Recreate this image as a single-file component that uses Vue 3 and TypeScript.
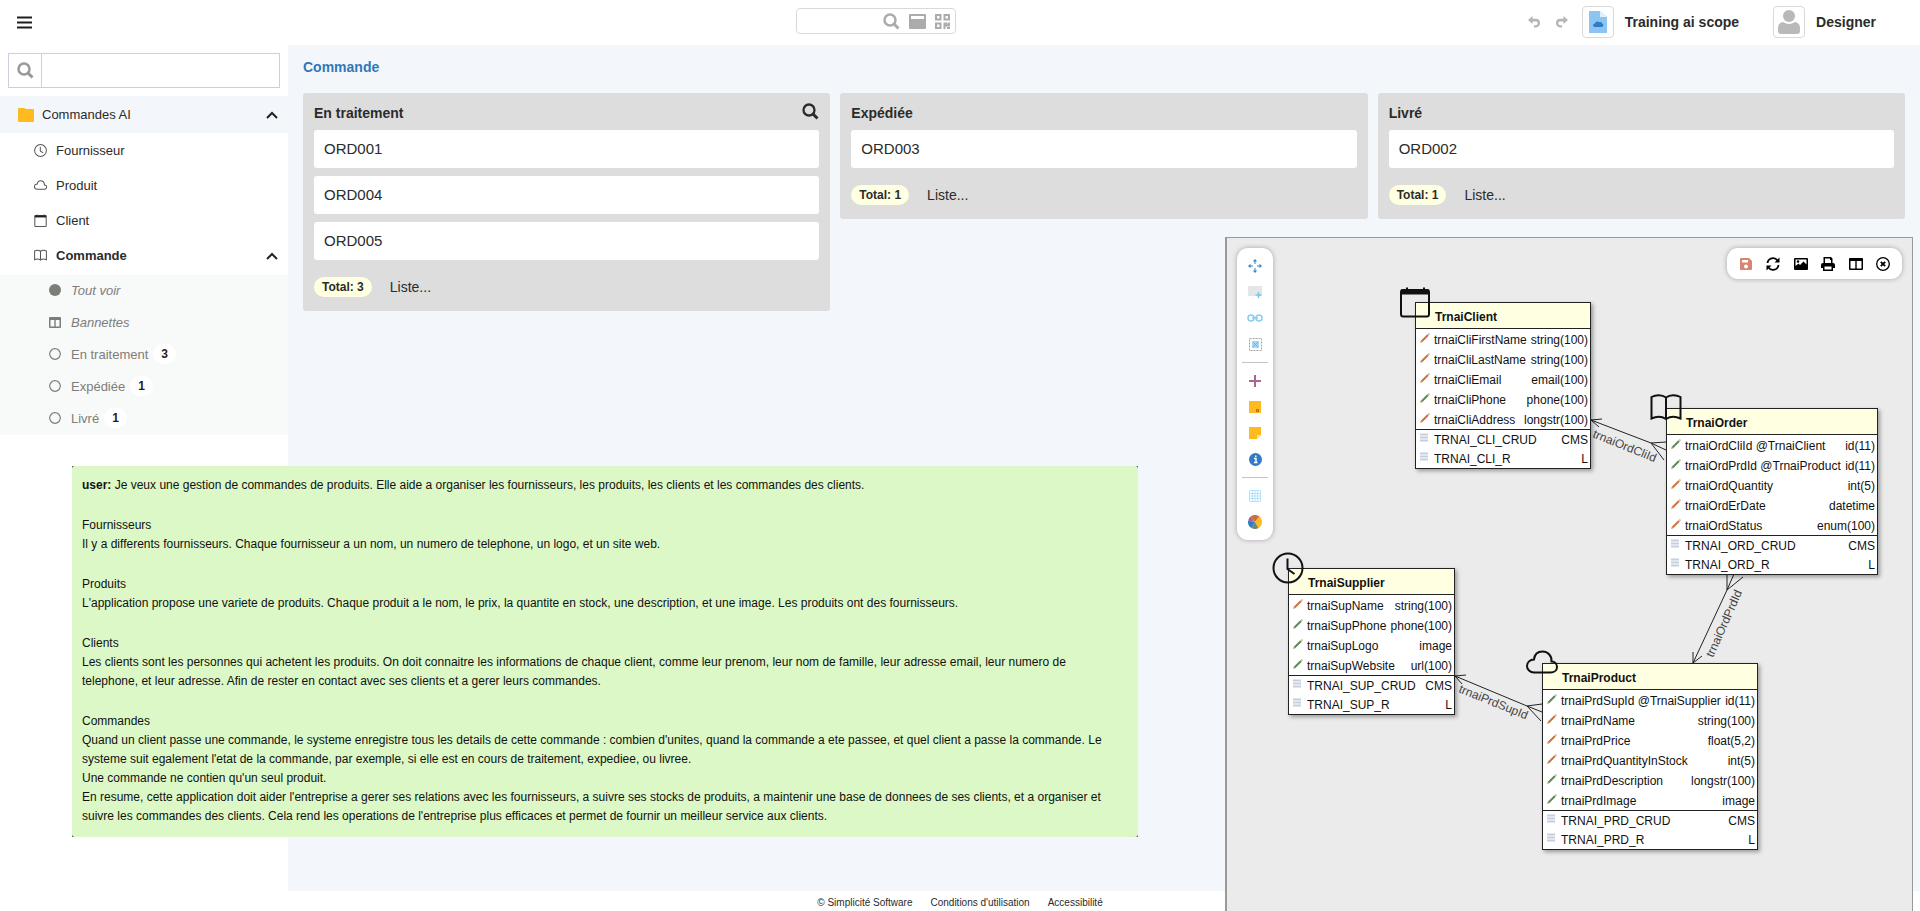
<script setup lang="ts">
import { ref } from 'vue'

type Glyph = 'clock' | 'cloud' | 'calendar' | 'book'

interface Field { name: string; type: string; required: boolean }
interface Entity {
  id: string
  title: string
  glyph: Glyph
  x: number
  y: number
  width: number
  fields: Field[]
  groups: { name: string; rights: string }[]
}

const f = (name: string, type: string, required = true): Field => ({ name, type, required })

const glyphs: Record<Glyph, string> = {
  clock: 'M16 1.500a14.500 14.500 0 1 0 0 29a14.500 14.500 0 1 0 0-29M15.500 6.500V17L22.500 22',
  cloud: 'M8 25.500H24.500C28.500 25.500 31 23 31 20C31 16.500 28.500 14.300 25.500 14.500C26 8.500 21.500 4.500 16.500 4.500C11.500 4.500 8.500 7.500 8 12.500C4 12.500 1 15.300 1 19C1 22.500 4 25.500 8 25.500Z',
  calendar: 'M4 4H28Q30 4 30 6V28Q30 30.500 28 30.500H4Q2 30.500 2 28V6Q2 4 4 4ZM2 6H30M8 1.500V4M25 1.500V4',
  book: 'M16 5.500V27M16 5.500C12 2.500 6 2.500 1.500 5V26.500C6 24.500 12 24.500 16 27C20 24.500 26 24.500 30.500 26.500V5C26 2.500 20 2.500 16 5.500',
}

const modules: { label: string; glyph: Glyph; active?: boolean }[] = [
  { label: 'Fournisseur', glyph: 'clock' },
  { label: 'Produit', glyph: 'cloud' },
  { label: 'Client', glyph: 'calendar' },
  { label: 'Commande', glyph: 'book', active: true },
]

const states = [
  { label: 'En traitement', count: 3 },
  { label: 'Expédiée', count: 1 },
  { label: 'Livré', count: 1 },
]

const columns = [
  { title: 'En traitement', orders: ['ORD001', 'ORD004', 'ORD005'], search: true },
  { title: 'Expédiée', orders: ['ORD003'], search: false },
  { title: 'Livré', orders: ['ORD002'], search: false },
]

const entities: Entity[] = [
  {
    id: 'client', title: 'TrnaiClient', glyph: 'calendar', x: 188, y: 64, width: 176,
    fields: [
      f('trnaiCliFirstName', 'string(100)'),
      f('trnaiCliLastName', 'string(100)'),
      f('trnaiCliEmail', 'email(100)'),
      f('trnaiCliPhone', 'phone(100)', false),
      f('trnaiCliAddress', 'longstr(100)'),
    ],
    groups: [{ name: 'TRNAI_CLI_CRUD', rights: 'CMS' }, { name: 'TRNAI_CLI_R', rights: 'L' }],
  },
  {
    id: 'order', title: 'TrnaiOrder', glyph: 'book', x: 439, y: 170, width: 212,
    fields: [
      f('trnaiOrdCliId @TrnaiClient', 'id(11)', false),
      f('trnaiOrdPrdId @TrnaiProduct', 'id(11)', false),
      f('trnaiOrdQuantity', 'int(5)'),
      f('trnaiOrdErDate', 'datetime'),
      f('trnaiOrdStatus', 'enum(100)'),
    ],
    groups: [{ name: 'TRNAI_ORD_CRUD', rights: 'CMS' }, { name: 'TRNAI_ORD_R', rights: 'L' }],
  },
  {
    id: 'supplier', title: 'TrnaiSupplier', glyph: 'clock', x: 61, y: 330, width: 167,
    fields: [
      f('trnaiSupName', 'string(100)'),
      f('trnaiSupPhone', 'phone(100)', false),
      f('trnaiSupLogo', 'image', false),
      f('trnaiSupWebsite', 'url(100)', false),
    ],
    groups: [{ name: 'TRNAI_SUP_CRUD', rights: 'CMS' }, { name: 'TRNAI_SUP_R', rights: 'L' }],
  },
  {
    id: 'product', title: 'TrnaiProduct', glyph: 'cloud', x: 315, y: 425, width: 216,
    fields: [
      f('trnaiPrdSupId @TrnaiSupplier', 'id(11)', false),
      f('trnaiPrdName', 'string(100)'),
      f('trnaiPrdPrice', 'float(5,2)'),
      f('trnaiPrdQuantityInStock', 'int(5)'),
      f('trnaiPrdDescription', 'longstr(100)', false),
      f('trnaiPrdImage', 'image', false),
    ],
    groups: [{ name: 'TRNAI_PRD_CRUD', rights: 'CMS' }, { name: 'TRNAI_PRD_R', rights: 'L' }],
  },
]

const relations = [
  {
    id: 'trnaiOrdCliId', x: 365, y: 199, angle: 22,
    path: 'M364 182L424 205L439 212M375 181L364 182L372 189M439 204L424 205L437 222',
  },
  {
    id: 'trnaiPrdSupId', x: 231, y: 454, angle: 22,
    path: 'M228 438L300 468L315 474M239 437L228 438L235 446M315 466L300 468L314 483',
  },
  {
    id: 'trnaiOrdPrdId', x: 486, y: 420, angle: -66,
    path: 'M466 425L500 352L507 336M466 414L466 425L475 418M500 336V352L516 339',
  },
]

const prompt: { lead?: string; lines: string[] }[] = [
  {
    lead: 'user:',
    lines: ['Je veux une gestion de commandes de produits. Elle aide a organiser les fournisseurs, les produits, les clients et les commandes des clients.'],
  },
  {
    lines: ['Fournisseurs', 'Il y a differents fournisseurs. Chaque fournisseur a un nom, un numero de telephone, un logo, et un site web.'],
  },
  {
    lines: ['Produits', "L'application propose une variete de produits. Chaque produit a le nom, le prix, la quantite en stock, une description, et une image. Les produits ont des fournisseurs."],
  },
  {
    lines: [
      'Clients',
      'Les clients sont les personnes qui achetent les produits. On doit connaitre les informations de chaque client, comme leur prenom, leur nom de famille, leur adresse email, leur numero de',
      'telephone, et leur adresse. Afin de rester en contact avec ses clients et a gerer leurs commandes.',
    ],
  },
  {
    lines: [
      'Commandes',
      "Quand un client passe une commande, le systeme enregistre tous les details de cette commande : combien d'unites, quand la commande a ete passee, et quel client a passe la commande. Le",
      "systeme suit egalement l'etat de la commande, par exemple, si elle est en cours de traitement, expediee, ou livree.",
      "Une commande ne contien qu'un seul produit.",
      "En resume, cette application doit aider l'entreprise a gerer ses relations avec les fournisseurs, a suivre ses stocks de produits, a maintenir une base de donnees de ses clients, et a organiser et",
      "suivre les commandes des clients. Cela rend les operations de l'entreprise plus efficaces et permet de fournir un meilleur service aux clients.",
    ],
  },
]

const menuQuery = ref('')
const globalQuery = ref('')
</script>

<template>
  <div class="page">
    <header class="topbar">
      <button class="icon-btn burger" aria-label="Menu">
        <svg width="15" height="13" viewBox="0 0 15 13"><path d="M0 1.500H15M0 6.500H15M0 11.500H15" stroke="#1f1f1f" stroke-width="2" /></svg>
      </button>
      <div class="global-search">
        <input v-model="globalQuery" type="text" aria-label="Recherche globale" />
        <button class="icon-btn" aria-label="Rechercher">
          <svg width="17" height="17" viewBox="0 0 17 17" fill="none" stroke="#ababab"><circle cx="7" cy="7" r="5.500" stroke-width="2.500" /><path d="M11 11L15.500 15.500" stroke-width="3" /></svg>
        </button>
        <button class="icon-btn" aria-label="Formulaire">
          <svg width="17" height="15" viewBox="0 0 17 15"><path fill="#ababab" fill-rule="evenodd" d="M1 0H16Q17 0 17 1V14Q17 15 16 15H1Q0 15 0 14V1Q0 0 1 0ZM2 2V5H15V2Z" /></svg>
        </button>
        <button class="icon-btn" aria-label="QR code">
          <svg width="15" height="15" viewBox="0 0 15 15" fill="none" stroke="#ababab" stroke-width="2"><path d="M1 1H5.500V5.500H1ZM9.500 1H14V5.500H9.500ZM1 9.500H5.500V14H1Z" /><path d="M9.500 15V9.500H11.500V11.500H14V8.500M12 14H15" /></svg>
        </button>
      </div>
      <div class="account">
        <button class="icon-btn" aria-label="Annuler">
          <svg width="13" height="12" viewBox="0 0 13 12"><path fill="#b5b5b5" d="M0 4L4.500 0V2.700H8C11 2.700 12 4.500 12 7.200C12 9.800 10 11.500 7 11.500H6V9.300H7C8.700 9.300 9.600 8.500 9.600 7.200C9.600 5.800 9 5.400 8 5.400H4.500V8Z" /></svg>
        </button>
        <button class="icon-btn" aria-label="Rétablir">
          <svg width="13" height="12" viewBox="0 0 13 12"><path fill="#b5b5b5" d="M13 4L8.500 0V2.700H5C2 2.700 1 4.500 1 7.200C1 9.800 3 11.500 6 11.500H7V9.300H6C4.300 9.300 3.400 8.500 3.400 7.200C3.400 5.800 4 5.400 5 5.400H8.500V8Z" /></svg>
        </button>
        <button class="profile scope">
          <span class="avatar">
            <svg width="18" height="22" viewBox="0 0 18 22"><path d="M0 0H11L18 6V22H0Z" fill="#8cc4f2" /><path d="M11 0L18 6H11Z" fill="#dff1fd" /><path d="M6 16C3.500 16 3.500 12.500 6 12.500C6.500 10.500 9 10 10.500 11.200C12 10.500 13 11.500 13 12.500C15 13 14.500 16 13 16Z" fill="#2f7bc4" /></svg>
          </span>
          Training ai scope
        </button>
        <button class="profile">
          <span class="avatar">
            <svg width="22" height="24" viewBox="0 0 22 24" fill="#b9b9b9"><circle cx="11" cy="6" r="6" /><path d="M5 12Q11 16 17 12Q22 13 22 18V21Q22 24 19 24H3Q0 24 0 21V18Q0 13 5 12Z" /></svg>
          </span>
          Designer
        </button>
      </div>
    </header>

    <div class="body">
      <aside class="sidebar">
        <label class="menu-search">
          <span class="lens">
            <svg width="17" height="17" viewBox="0 0 17 17" fill="none" stroke="#999"><circle cx="7" cy="7" r="5.500" stroke-width="2.500" /><path d="M11 11L15.500 15.500" stroke-width="3" /></svg>
          </span>
          <input v-model="menuQuery" type="text" aria-label="Recherche menu" />
        </label>
        <nav>
          <a href="#" class="domain">
            <svg width="16" height="14" viewBox="0 0 16 14"><path fill="#ffba1f" d="M1 0H6L8 1H15Q16 1 16 2V13Q16 14 15 14H1Q0 14 0 13V1Q0 0 1 0Z" /></svg>
            <span>Commandes AI</span>
            <svg class="chevron" width="12" height="8" viewBox="0 0 12 8"><path d="M1 7L6 2L11 7" fill="none" stroke="#222" stroke-width="2" /></svg>
          </a>
          <ul class="modules">
            <li v-for="m in modules" :key="m.label">
              <a href="#" :class="{ active: m.active }">
                <svg width="13" height="13" viewBox="0 0 32 32" fill="none" stroke="#555" stroke-width="2.500"><path :d="glyphs[m.glyph]" /><path v-if="m.glyph === 'calendar'" d="M2 6H30" stroke="#222" stroke-width="5" /></svg>
                <span>{{ m.label }}</span>
                <svg v-if="m.active" class="chevron" width="12" height="8" viewBox="0 0 12 8"><path d="M1 7L6 2L11 7" fill="none" stroke="#222" stroke-width="2" /></svg>
              </a>
            </li>
          </ul>
          <ul class="views">
            <li>
              <a href="#" class="slanted">
                <svg width="12" height="12" viewBox="0 0 12 12"><circle cx="6" cy="6" r="6" fill="#7b7f78" /></svg>Tout voir
              </a>
            </li>
            <li>
              <a href="#" class="slanted">
                <svg width="12" height="11" viewBox="0 0 12 11"><path fill="#7b7f78" fill-rule="evenodd" d="M1 0H11Q12 0 12 1V10Q12 11 11 11H1Q0 11 0 10V1Q0 0 1 0ZM1.500 3V9.500H5.300V3ZM6.700 3V9.500H10.500V3Z" /></svg>Bannettes
              </a>
            </li>
            <li v-for="s in states" :key="s.label">
              <a href="#">
                <svg width="12" height="12" viewBox="0 0 12 12"><circle cx="6" cy="6" r="5.300" fill="none" stroke="#7b7f78" stroke-width="1.200" /></svg>{{ s.label }}
                <span class="count">{{ s.count }}</span>
              </a>
            </li>
          </ul>
        </nav>
      </aside>

      <main class="board">
        <h1><a href="#">Commande</a></h1>
        <div class="columns">
          <section v-for="c in columns" :key="c.title" class="column">
            <header>
              <h2>{{ c.title }}</h2>
              <button v-if="c.search" class="icon-btn lookup" aria-label="Rechercher">
                <svg width="17" height="17" viewBox="0 0 17 17" fill="none" stroke="#2b2b2b"><circle cx="7" cy="7" r="5.500" stroke-width="2.300" /><path d="M11 11L15.500 15.500" stroke-width="3" /></svg>
              </button>
            </header>
            <div class="cards">
              <button v-for="o in c.orders" :key="o" class="card">{{ o }}</button>
            </div>
            <footer>
              <span class="total">Total: {{ c.orders.length }}</span>
              <a href="#">Liste...</a>
            </footer>
          </section>
        </div>
      </main>
    </div>

    <footer class="legal">
      <a href="#">© Simplicité Software</a>
      <a href="#">Conditions d'utilisation</a>
      <a href="#">Accessibilité</a>
    </footer>

    <article class="prompt">
      <div class="bubble">
        <p v-for="(p, i) in prompt" :key="i">
          <template v-if="p.lead"><b>{{ p.lead }}</b>&nbsp;</template>
          <template v-for="(line, j) in p.lines" :key="j"><br v-if="j > 0" />{{ line }}</template>
        </p>
      </div>
    </article>

    <section class="modeler" aria-label="Modèle">
      <svg class="links" width="100%" height="100%">
        <g v-for="r in relations" :key="r.id">
          <path :d="r.path" fill="none" stroke="#222" />
          <text :transform="`translate(${r.x} ${r.y}) rotate(${r.angle})`">{{ r.id }}</text>
        </g>
      </svg>

      <table
        v-for="e in entities"
        :key="e.id"
        class="entity"
        :style="{ left: e.x + 'px', top: e.y + 'px', width: e.width + 'px' }"
      >
        <colgroup>
          <col class="mark-col" />
          <col />
          <col class="type-col" />
        </colgroup>
        <thead>
          <tr>
            <th colspan="3">
              <svg class="badge" width="32" height="32" viewBox="0 0 32 32" fill="none" stroke="#111" stroke-width="2"><path :d="glyphs[e.glyph]" /><path v-if="e.glyph === 'calendar'" d="M2 6H30" stroke-width="5" /></svg>
              {{ e.title }}
            </th>
          </tr>
        </thead>
        <tbody>
          <tr v-for="a in e.fields" :key="a.name">
            <td class="mark">
              <svg width="10" height="10" viewBox="0 0 10 10"><path d="M1 9L8 2" :stroke="a.required ? '#d2703a' : '#5c8a55'" stroke-width="2" /><path d="M8 2L9.500 0.500" stroke="#cfc3b0" stroke-width="2" /><path d="M0 10L1.500 8.500" stroke="#d8c9a8" stroke-width="1.500" /></svg>
            </td>
            <td>{{ a.name }}</td>
            <td class="type">{{ a.type }}</td>
          </tr>
        </tbody>
        <tbody class="groups">
          <tr v-for="g in e.groups" :key="g.name">
            <td class="mark">
              <svg width="8" height="9" viewBox="0 0 8 9"><path d="M0 1.500H8M0 4.500H8M0 7.500H8" stroke="#c6cddd" stroke-width="2" /></svg>
            </td>
            <td>{{ g.name }}</td>
            <td class="type">{{ g.rights }}</td>
          </tr>
        </tbody>
      </table>

      <div class="palette">
        <button aria-label="Déplacer">
          <svg width="14" height="14" viewBox="0 0 14 14" fill="#2f87d0"><path d="M7 0L9.200 2.500H4.800ZM7 14L9.200 11.500H4.800ZM0 7L2.500 4.800V9.200ZM14 7L11.500 4.800V9.200Z" /><path d="M7 2V5M7 9V12M2 7H5M9 7H12" stroke="#2f87d0" /></svg>
        </button>
        <button aria-label="Ajouter un objet">
          <svg width="14" height="14" viewBox="0 0 14 14"><path d="M0 1H14V11H0Z" fill="#e4e6e8" /><path d="M10.500 7V13M7.500 10H13.500" stroke="#7cc4ee" stroke-width="1.500" /></svg>
        </button>
        <button aria-label="Ajouter un lien">
          <svg width="16" height="8" viewBox="0 0 16 8" fill="none" stroke="#8ccbf0" stroke-width="1.500"><circle cx="4" cy="4" r="3" /><circle cx="12" cy="4" r="3" /><path d="M5 4H11" /></svg>
        </button>
        <button aria-label="Sélectionner">
          <svg width="13" height="13" viewBox="0 0 13 13"><path d="M.5 .5H12.500V12.500H.5Z" fill="none" stroke="#a5a5a5" stroke-dasharray="2 1" /><path d="M3 3H10V10H3Z" fill="#a5d8f5" /><path d="M4 4L9 9M9 4L4 9" stroke="#6bb4e5" /></svg>
        </button>
        <hr />
        <button aria-label="Ajouter">
          <svg width="12" height="12" viewBox="0 0 12 12"><path d="M6 0V12M0 6H12" stroke="#a9658f" stroke-width="2" /></svg>
        </button>
        <button aria-label="Note liée">
          <svg width="12" height="12" viewBox="0 0 12 12"><path d="M0 0H12V12H0Z" fill="#ffba1f" /><path d="M7.500 8.500H9.500V10.500H7.500Z" fill="none" stroke="#b0601f" /></svg>
        </button>
        <button aria-label="Note">
          <svg width="12" height="12" viewBox="0 0 12 12"><path d="M0 0H12V8L8 12H0Z" fill="#ffba1f" /><path d="M8 12V8H12Z" fill="#ffe5a3" /></svg>
        </button>
        <button aria-label="Information">
          <svg width="13" height="13" viewBox="0 0 13 13"><circle cx="6.500" cy="6.500" r="6.500" fill="#2f7bc4" /><path d="M5 5.500H7V9.500M5 9.500H8.500M6 3.300H7.500" stroke="#fff" stroke-width="1.400" fill="none" /></svg>
        </button>
        <hr />
        <button aria-label="Grille">
          <svg width="12" height="12" viewBox="0 0 12 12" fill="none" stroke="#b5e3f7"><path d="M.5 .5H11.500V11.500H.5ZM3.500 0V12M6 0V12M8.500 0V12M0 3.500H12M0 6H12M0 8.500H12" /></svg>
        </button>
        <button aria-label="Couleurs">
          <svg width="14" height="14" viewBox="0 0 14 14"><path d="M7 7L2.500 1.600A7 7 0 0 1 11.500 1.600Z" fill="#cc6f3c" /><path d="M7 7L11.500 1.600A7 7 0 0 1 10.500 13Z" fill="#ffba1f" /><path d="M7 7L10.500 13A7 7 0 0 1 3.500 13Z" fill="#6f8a68" /><path d="M7 7L3.500 13A7 7 0 0 1 .2 5.500Z" fill="#2f7bc4" /><path d="M7 7L.2 5.500A7 7 0 0 1 2.500 1.600Z" fill="#a9658f" /></svg>
        </button>
      </div>

      <div class="actions">
        <button aria-label="Enregistrer">
          <svg width="12" height="12" viewBox="0 0 12 12"><path fill="#d58570" fill-rule="evenodd" d="M1 0H9L12 3V11Q12 12 11 12H1Q0 12 0 11V1Q0 0 1 0ZM2 2V4.500H8V2ZM6 6.500A2 2 0 1 0 6 10.500A2 2 0 1 0 6 6.500Z" /></svg>
        </button>
        <button aria-label="Actualiser">
          <svg width="14" height="14" viewBox="0 0 14 14"><path d="M1.500 6A5.500 5.500 0 0 1 11.500 3.500M12.500 8A5.500 5.500 0 0 1 2.500 10.500" fill="none" stroke="#000" stroke-width="1.800" /><path d="M13.500 .5V5.500H8.500ZM.5 13.500V8.500H5.500Z" /></svg>
        </button>
        <button aria-label="Image">
          <svg width="14" height="12" viewBox="0 0 14 12"><path fill-rule="evenodd" d="M1 0H13Q14 0 14 1V11Q14 12 13 12H1Q0 12 0 11V1Q0 0 1 0ZM1.500 1.500V8L4.500 5.500L6 7L9.500 3.500L12.500 6.500V1.500Z" /><circle cx="4" cy="3.500" r="1.300" /></svg>
        </button>
        <button aria-label="Imprimer">
          <svg width="14" height="14" viewBox="0 0 14 14"><path fill-rule="evenodd" d="M2.500 0H10L11.500 1.500V6H12Q14 6 14 8V11H12V14H2V11H0V8Q0 6 2 6H2.500ZM4 1.500V6H10V3H9V1.500ZM3.500 9.500V12.500H10.500V9.500Z" /></svg>
        </button>
        <button aria-label="Colonnes">
          <svg width="14" height="12" viewBox="0 0 14 12"><path fill-rule="evenodd" d="M1 0H13Q14 0 14 1V11Q14 12 13 12H1Q0 12 0 11V1Q0 0 1 0ZM1.500 3V10.500H6.300V3ZM7.700 3V10.500H12.500V3Z" /></svg>
        </button>
        <button aria-label="Fermer">
          <svg width="14" height="14" viewBox="0 0 14 14" fill="none" stroke="#000"><circle cx="7" cy="7" r="6.300" stroke-width="1.300" /><path d="M4.800 4.800L9.200 9.200M9.200 4.800L4.800 9.200" stroke-width="1.800" /></svg>
        </button>
      </div>
    </section>
  </div>
</template>

<style>
body {
  margin: 0;
}
</style>

<style scoped>
.page {
  position: relative;
  display: flex;
  flex-direction: column;
  min-height: 100vh;
  overflow: hidden;
  background: #fff;
  color: #2b2b2b;
  font-family: "Liberation Sans", Arial, sans-serif;
  font-size: 13px;
}
.page *,
.page {
  box-sizing: border-box;
}
a {
  color: inherit;
  text-decoration: none;
}
button {
  border: 0;
  padding: 0;
  background: none;
  color: inherit;
  font: inherit;
  cursor: pointer;
}
input {
  min-width: 0;
  border: 0;
  outline: 0;
  padding: 0 8px;
  background: none;
  font: inherit;
}
svg {
  display: block;
  flex: none;
}
ul {
  margin: 0;
  padding: 0;
  list-style: none;
}
h1,
h2 {
  margin: 0;
  font-size: 14px;
}
.icon-btn {
  display: flex;
  align-items: center;
}

/* Top bar */
.topbar {
  display: grid;
  grid-template-columns: 796fr 160px 964fr;
  align-items: center;
  height: 45px;
}
.burger {
  margin-left: 17px;
}
.global-search {
  display: flex;
  align-items: center;
  gap: 9px;
  height: 26px;
  margin-bottom: 3px;
  padding-right: 5px;
  border: 1px solid #d9d9d9;
  border-radius: 4px;
}
.global-search input {
  flex: 1;
}
.account {
  display: flex;
  align-items: center;
  justify-content: flex-end;
  gap: 14px;
  padding: 0 44px 2px 0;
}
.profile {
  display: flex;
  align-items: center;
  gap: 11px;
  font-size: 14px;
  font-weight: bold;
}
.scope {
  margin-right: 20px;
}
.avatar {
  display: flex;
  align-items: center;
  justify-content: center;
  width: 32px;
  height: 32px;
  border: 1px solid #d9d9d9;
  border-radius: 4px;
}

/* Menu */
.body {
  display: flex;
  flex: 1;
}
.sidebar {
  flex: none;
  width: 288px;
}
.menu-search {
  display: flex;
  height: 35px;
  margin: 8px;
  border: 1px solid #cbcfdf;
}
.lens {
  display: flex;
  align-items: center;
  justify-content: center;
  width: 33px;
  border-right: 1px solid #cbcfdf;
}
.menu-search input {
  flex: 1;
}
.domain,
.modules a,
.views a {
  display: flex;
  align-items: center;
}
.domain {
  gap: 8px;
  height: 37px;
  padding: 0 10px 0 18px;
  background: #f3f6fa;
}
.modules {
  padding-bottom: 2px;
}
.modules a {
  gap: 9px;
  height: 35px;
  padding: 0 10px 0 34px;
}
.modules .active {
  font-weight: bold;
}
.chevron {
  margin-left: auto;
}
.views {
  background: #f8f9f9;
  color: #7d7d7d;
}
.views a {
  height: 32px;
  padding: 0 0 2px 49px;
}
.views svg {
  margin-right: 10px;
}
.slanted {
  font-style: italic;
}
.count {
  margin-left: 5px;
  padding: 0 8px;
  border-radius: 10px;
  background: #fff;
  color: #222;
  font-size: 12px;
  font-weight: bold;
  line-height: 20px;
}

/* Board */
.board {
  flex: 1;
  min-width: 0;
  padding: 0 15px;
  background: #f3f7fc;
}
.board h1 {
  margin-bottom: 4px;
  color: #2f78b8;
  line-height: 44px;
}
.columns {
  display: grid;
  grid-template-columns: repeat(3, minmax(0, 1fr));
  align-items: start;
  gap: 10px;
}
.column {
  padding: 0 11px 14px;
  border-radius: 3px;
  background: #ddd;
}
.column > header {
  display: flex;
  align-items: center;
  justify-content: space-between;
  height: 37px;
}
.column h2 {
  padding-top: 3px;
}
.cards {
  display: flex;
  flex-direction: column;
  gap: 8px;
}
.card {
  height: 38px;
  padding: 0 10px 2px;
  border-radius: 3px;
  background: #fff;
  font-size: 15px;
  text-align: left;
}
.column > footer {
  display: flex;
  align-items: center;
  gap: 18px;
  margin-top: 17px;
  font-size: 14px;
  line-height: 20px;
}
.total {
  padding: 0 8px;
  border-radius: 10px;
  background: #ffffe1;
  font-size: 12px;
  font-weight: bold;
}
.legal {
  display: flex;
  justify-content: center;
  gap: 18px;
  height: 20px;
  padding-top: 2px;
  font-size: 10px;
  line-height: 20px;
}

/* Prompt bubble */
.prompt {
  position: absolute;
  top: 466px;
  left: 72px;
  width: 1066px;
  background: #555;
}
.bubble {
  padding: 10px 10px 11px;
  border-radius: 3px;
  background: #dcf8c6;
  color: #111;
  font-size: 12px;
  line-height: 19px;
  white-space: nowrap;
}
.bubble p {
  margin: 0;
}
.bubble p + p {
  margin-top: 21px;
}

/* Modeler window */
.modeler {
  position: absolute;
  top: 237px;
  right: 7px;
  bottom: 0;
  width: 688px;
  border: solid #999;
  border-width: 1px 1px 0 2px;
  background: #ebebeb;
}
.links {
  position: absolute;
  inset: 0;
}
.links text {
  fill: #444;
  font-size: 12px;
}
.entity {
  position: absolute;
  table-layout: fixed;
  border: 1px solid #222;
  border-spacing: 0;
  background: #fff;
  box-shadow: 2px 2px 4px rgba(0, 0, 0, 0.35);
  color: #111;
  font-size: 12px;
  line-height: 14px;
}
.mark-col {
  width: 18px;
}
.type-col {
  width: 68px;
}
.entity th {
  height: 26px;
  padding: 2px 0 0 19px;
  border-bottom: 1px solid #222;
  background: #ffffe1;
  text-align: left;
}
.entity td {
  height: 20px;
  padding: 2px 0 0;
  white-space: nowrap;
}
.entity .mark {
  padding: 0 0 3px 4px;
}
.entity .type {
  padding-right: 2px;
  text-align: right;
}
.groups tr:first-child td {
  height: 19px;
  border-top: 1px solid #222;
}
.badge {
  position: absolute;
  top: -17px;
  left: -17px;
}
.palette,
.actions {
  position: absolute;
  top: 10px;
  display: flex;
  padding: 5px;
  border-radius: 11px;
  background: #fff;
  box-shadow: 0 0 5px rgba(0, 0, 0, 0.3);
}
.palette {
  left: 10px;
  flex-direction: column;
  width: 36px;
}
.actions {
  right: 10px;
  width: 175px;
  height: 31px;
}
.palette button,
.actions button {
  display: flex;
  align-items: center;
  justify-content: center;
}
.palette button {
  height: 26px;
}
.actions button {
  flex: 1;
}
.palette hr {
  width: 100%;
  height: 1px;
  margin: 5px 0;
  border: 0;
  background: #c4c4c4;
}
</style>
